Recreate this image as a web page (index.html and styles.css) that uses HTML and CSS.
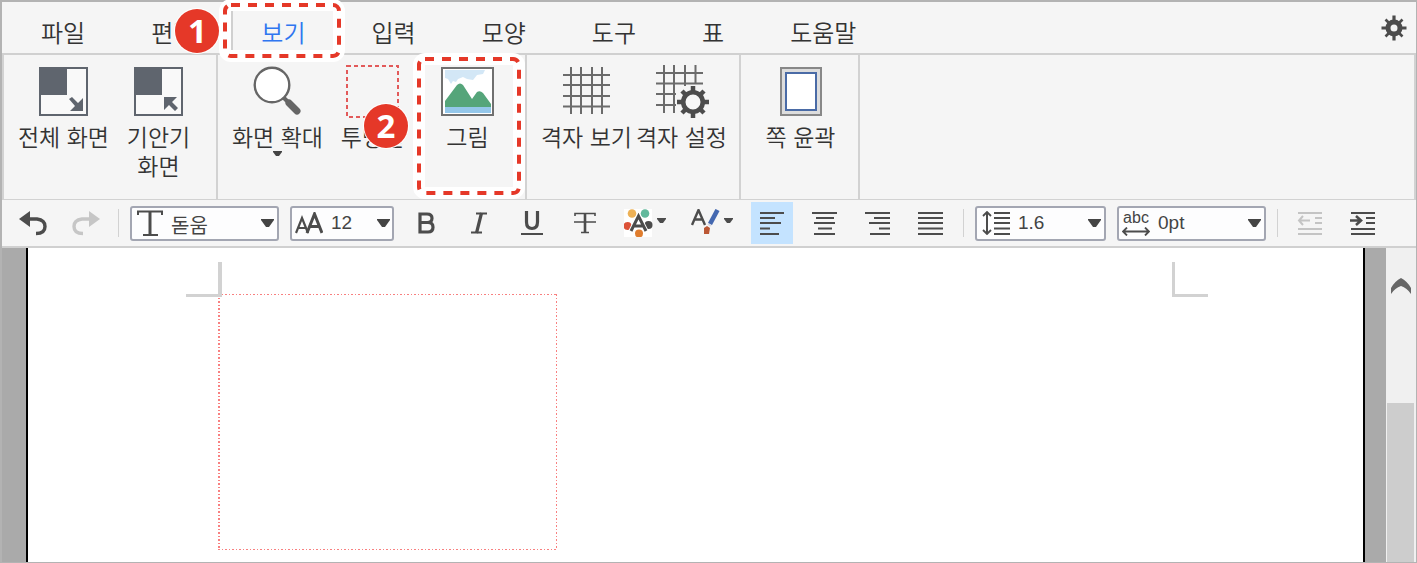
FILE: index.html
```html
<!DOCTYPE html>
<html lang="ko">
<head>
<meta charset="utf-8">
<title>보기</title>
<link rel="stylesheet" href="styles.css">
</head>
<body>
<div class="editor">
  <header class="menubar">
    <nav class="tabs">
      <button class="tab">파일</button>
      <button class="tab">편집</button>
      <button class="tab tab-active">보기
        <svg class="callout callout-tab" viewBox="0 0 128 64"><rect class="halo" x="7" y="7" width="114" height="51" rx="6"/><rect class="dash" x="7" y="7" width="114" height="51" rx="6"/></svg>
        <span class="badge badge-one">1</span>
      </button>
      <button class="tab">입력</button>
      <button class="tab">모양</button>
      <button class="tab">도구</button>
      <button class="tab">표</button>
      <button class="tab">도움말</button>
    </nav>
    <button class="settings" aria-label="설정">
      <svg width="26" height="26" viewBox="0 0 26 26"><g stroke="#4c4c4c" stroke-width="3.2"><path d="M13 .5v25M.5 13h25"/><path stroke-width="2.6" d="M4.500 4.500l17 17M21.500 4.500l-17 17"/></g><circle cx="13" cy="13" r="6" fill="#f4f4f4" stroke="#4c4c4c" stroke-width="5"/></svg>
    </button>
  </header>

  <section class="ribbon">
    <div class="group">
      <button class="tool">
        <svg class="icon" viewBox="0 0 53 53"><path d="M3 3h47v47H3z" fill="#f9f9f9" stroke="#5f656e" stroke-width="2"/><path d="M2 2h28v28H2z" fill="#5f656e"/><path d="M32 34l3-2 6 6 5-5v13H33l5-5z" fill="#5f656e"/></svg>
        <span>전체 화면</span>
      </button>
      <button class="tool">
        <svg class="icon" viewBox="0 0 53 53"><path d="M3 3h47v47H3z" fill="#f9f9f9" stroke="#5f656e" stroke-width="2"/><path d="M2 2h28v28H2z" fill="#5f656e"/><path d="M32 32h13l-5 5 6 6-3 3-6-6-5 5z" fill="#5f656e"/></svg>
        <span>기안기<br>화면</span>
      </button>
    </div>
    <div class="group">
      <button class="tool">
        <svg class="icon" viewBox="0 0 53 53"><path d="M32 32l5 5" stroke="#666" stroke-width="4"/><path d="M38 38l8 8" stroke="#666" stroke-width="7" stroke-linecap="round"/><circle cx="21" cy="20" r="17.300" fill="#fff" stroke="#666" stroke-width="2.400"/></svg>
        <span>화면 확대</span>
        <svg class="more" width="9" height="5" viewBox="0 0 9 5"><path d="M0 0h9v1L6 5H3L0 1z" fill="#444"/></svg>
      </button>
      <button class="tool">
        <svg class="icon" viewBox="0 0 53 53"><rect x="1" y="1" width="51" height="51" fill="none" stroke="#e25a5a" stroke-width="2" stroke-dasharray="4 3"/></svg>
        <span>투명선</span>
        <span class="badge badge-two">2</span>
      </button>
      <button class="tool">
        <svg class="icon" viewBox="0 0 53 53"><path d="M1 3h51v47H1z" fill="#fff" stroke="#707070" stroke-width="2"/><path d="M4 5h40l-2 4-6 1-4 5-6-1-4-2-5 2-2 3-3-1-2 3-3-5-3-1z" fill="#d3e7f6"/><path d="M4 42V36L16 20q3-3 6 0L31 34l5-7q3-2 6 1L50 39v3z" fill="#55a57a"/><path d="M4 42h46v6H4z" fill="#94c7ea"/></svg>
        <span>그림</span>
        <svg class="callout callout-picture" viewBox="0 0 114 148"><rect class="halo" x="7" y="7" width="100" height="134" rx="6"/><rect class="dash" x="7" y="7" width="100" height="134" rx="6"/></svg>
      </button>
    </div>
    <div class="group">
      <button class="tool">
        <svg class="icon" viewBox="0 0 53 53"><path d="M11 2v47M21 2v47M32 2v47M42 2v47M3 10h47M3 20h47M3 31h47M3 41.500h47" stroke="#6b6b6b" stroke-width="2"/></svg>
        <span>격자 보기</span>
      </button>
      <button class="tool">
        <svg class="icon gear-grid" viewBox="0 0 53 53"><path d="M9 0v48M19 0v48M30 0v21M40.500 0v18M1 8h47M1 18.500h47M1 29h20M1 40h20" stroke="#6b6b6b" stroke-width="2"/><circle cx="38" cy="37" r="14" fill="#f5f5f5"/><path d="M38 21v32M22 37h32M27 26l22 22M49 26L27 48" stroke="#4c4c4c" stroke-width="4.500"/><circle cx="38" cy="37" r="9.800" fill="#f7f7f7" stroke="#4c4c4c" stroke-width="4.600"/></svg>
        <span>격자 설정</span>
      </button>
    </div>
    <div class="group">
      <button class="tool">
        <svg class="icon" viewBox="0 0 53 53"><path d="M7 3h40v47H7z" fill="#ddd" stroke="#888" stroke-width="2"/><path d="M12 8h30v37H12z" fill="#fff" stroke="#4a6ba6" stroke-width="2"/></svg>
        <span>쪽 윤곽</span>
      </button>
    </div>
  </section>

  <section class="toolbar">
    <button class="act act-solid" aria-label="실행 취소"><svg width="28" height="26" viewBox="0 0 28 26"><path d="M10 9h8q8 1 8 7.500 0 7-9 7" fill="none" stroke="#4c4c4c" stroke-width="3.400"/><path d="M0 9L11 1v16z" fill="#4c4c4c"/></svg></button>
    <button class="act act-solid" aria-label="다시 실행"><svg width="28" height="26" viewBox="0 0 28 26"><path d="M18 9h-8q-8 1-8 7.500 0 7 9 7" fill="none" stroke="#c6c6c6" stroke-width="3.400"/><path d="M28 9L17 1v16z" fill="#c6c6c6"/></svg></button>
    <i class="sep"></i>
    <label class="field field-font">
      <svg width="26" height="26" viewBox="0 0 26 26"><path d="M1 5V1.500h24V5" fill="none" stroke="#4c4c4c" stroke-width="2"/><path d="M13 1v24" stroke="#4c4c4c" stroke-width="3"/><path d="M6 25h15" stroke="#4c4c4c" stroke-width="2"/></svg>
      <select class="font-name" aria-label="글꼴"><option>돋움</option></select>
      <svg class="caret" viewBox="0 0 14 10"><path d="M1 1h13v1L9 9H6L1 2z"/></svg>
    </label>
    <label class="field field-size">
      <svg width="28" height="22" viewBox="0 0 28 22"><path d="M1 21L7 6l6 15M3 16h8" fill="none" stroke="#4c4c4c" stroke-width="2.200"/><path d="M12 21L19.500 2 27 21M14 14.500h11" fill="none" stroke="#4c4c4c" stroke-width="3"/></svg>
      <select aria-label="글자 크기"><option>12</option></select>
      <svg class="caret" viewBox="0 0 14 10"><path d="M1 1h13v1L9 9H6L1 2z"/></svg>
    </label>
    <button class="act" aria-label="굵게"><svg width="18" height="22" viewBox="0 0 18 22"><path d="M3 2h7q5 0 5 4.300T10 10.500H3zM3 10.500h8q5 0 5 4.700T11 20H3z" fill="none" stroke="#4c4c4c" stroke-width="3.200"/></svg></button>
    <button class="act" aria-label="기울임"><svg width="18" height="22" viewBox="0 0 18 22"><path d="M6 1.500h11M1 20.500h11" stroke="#4c4c4c" stroke-width="2"/><path d="M11.500 1L6.500 21" stroke="#4c4c4c" stroke-width="3.200"/></svg></button>
    <button class="act" aria-label="밑줄"><svg width="22" height="24" viewBox="0 0 22 24"><path d="M5.500 0v11q0 6.500 5.500 6.500t5.500-6.500V0" fill="none" stroke="#4c4c4c" stroke-width="3.200"/><path d="M0 23h22" stroke="#4c4c4c" stroke-width="2"/></svg></button>
    <button class="act" aria-label="취소선"><svg width="22" height="22" viewBox="0 0 22 22"><path d="M1 4V1.500h20V4M0 10h22M7 20.500h8" fill="none" stroke="#4c4c4c" stroke-width="1.600"/><path d="M11 1v20" stroke="#4c4c4c" stroke-width="2.600"/></svg></button>
    <button class="act act-solid act-wide" aria-label="글자 색"><svg width="42" height="28" viewBox="0 0 42 28"><path d="M0 0h28v28H0z" fill="#fff"/><circle cx="8" cy="4.500" r="4.300" fill="#edb156"/><circle cx="21" cy="4.500" r="4.300" fill="#62b99c"/><circle cx="3.500" cy="17" r="4" fill="#dc5238"/><circle cx="24.500" cy="16" r="4" fill="#4c4c4c"/><circle cx="15" cy="24.500" r="4" fill="#e07d2e"/><path d="M7 22l7.500-15L22 22M10 17h9" fill="none" stroke="#fff" stroke-width="5"/><path d="M7 22l7.500-15L22 22M10 17h9" fill="none" stroke="#4c4c4c" stroke-width="3"/><path d="M33 9h9v1l-3 4h-3l-3-4z" fill="#4c4c4c"/></svg></button>
    <button class="act act-solid act-wide" aria-label="글자 서식"><svg width="42" height="28" viewBox="0 0 42 28"><path d="M1 16L7.500 1 14 16M3.500 10.500h8" fill="none" stroke="#4c4c4c" stroke-width="2.400"/><path d="M26.500 1L19 15" stroke="#4468b0" stroke-width="4.600"/><path d="M17 15l3 2" stroke="#d9d9e4" stroke-width="2"/><path d="M13 19l3-2 3 2-1 6h-5z" fill="#bb5734"/><path d="M33 9h9v1l-3 4h-3l-3-4z" fill="#4c4c4c"/></svg></button>
    <button class="act act-on" aria-label="왼쪽 정렬"><svg width="26" height="24" viewBox="0 0 26 24"><path d="M1 2h24M1 7h15M1 12h21M1 17.500h10M1 23h19"/></svg></button>
    <button class="act" aria-label="가운데 정렬"><svg width="26" height="24" viewBox="0 0 26 24"><path d="M0 2h25M4 7h18M2 12h21M6 17.500h14M2 23h21"/></svg></button>
    <button class="act" aria-label="오른쪽 정렬"><svg width="26" height="24" viewBox="0 0 26 24"><path d="M0 2h25M9 7h16M4 12h21M14 17.500h11M5 23h20"/></svg></button>
    <button class="act" aria-label="양쪽 정렬"><svg width="26" height="24" viewBox="0 0 26 24"><path d="M0 2h25M0 7h25M0 12h25M0 17.500h25M0 23h25"/></svg></button>
    <i class="sep"></i>
    <label class="field field-line">
      <svg width="28" height="24" viewBox="0 0 28 24"><path d="M5 2v20" stroke="#4c4c4c" stroke-width="2"/><path d="M1 5l4-4 4 4M1 19l4 4 4-4" fill="none" stroke="#4c4c4c" stroke-width="1.800"/><path d="M12 2h16M12 7h16M12 12h16M12 17.500h16M12 23h16" stroke="#4c4c4c" stroke-width="1.800"/></svg>
      <select aria-label="줄 간격"><option>1.6</option></select>
      <svg class="caret" viewBox="0 0 14 10"><path d="M1 1h13v1L9 9H6L1 2z"/></svg>
    </label>
    <label class="field field-space">
      <span class="abc">abc<svg width="28" height="9" viewBox="0 0 28 9"><path d="M1 4.500h26M5 .5l-4 4 4 4M23 .5l4 4-4 4" fill="none" stroke="#4c4c4c" stroke-width="1.800"/></svg></span>
      <select aria-label="글자 간격"><option>0pt</option></select>
      <svg class="caret" viewBox="0 0 14 10"><path d="M1 1h13v1L9 9H6L1 2z"/></svg>
    </label>
    <i class="sep"></i>
    <button class="act act-off" aria-label="내어쓰기"><svg width="26" height="24" viewBox="0 0 26 24"><path d="M1 2h24M18 7h7M18 12h7M1 18h24M1 23h24M2 9.500h11M6 5L2 9.500 6 14"/></svg></button>
    <button class="act" aria-label="들여쓰기"><svg width="26" height="24" viewBox="0 0 26 24"><path d="M1 2h24M16 7h9M16 12h9M1 18h24M1 23h24"/><path d="M0 9.500h11M6 5l5 4.500L6 14" stroke-width="2.600"/></svg></button>
  </section>

  <main class="workspace">
    <div class="page">
      <div class="marks"><i class="mark mark-left"></i><i class="mark mark-right"></i></div>
      <div class="frame"></div>
    </div>
    <div class="scrollbar">
      <button class="up" aria-label="위로"><svg width="20" height="16" viewBox="0 0 20 16"><path d="M0 10Q4 3 10 0q6 3 10 10v6q-4-6-10-8Q4 10 0 16z" fill="#666"/></svg></button>
      <div class="thumb"></div>
    </div>
  </main>
</div>
</body>
</html>
```
FILE: styles.css
```css
* { box-sizing: border-box; }

body {
  margin: 0;
  font-family: "Noto Sans CJK KR", sans-serif;
  font-weight: 350;
  color: #333;
}

button {
  position: relative;
  margin: 0;
  padding: 0;
  border: 0;
  background: none;
  color: inherit;
  font: inherit;
}

svg { display: block; flex: none; }

.editor {
  display: flex;
  flex-direction: column;
  min-height: 100vh;
  border: solid #b3b3b3;
  border-width: 2px 1px 1px 2px;
  background: #f5f5f5;
}

.menubar {
  display: flex;
  align-items: stretch;
  justify-content: space-between;
  height: 53px;
  padding: 0 9px;
  border-bottom: 2px solid #d0d0d0;
}

.tabs { display: flex; gap: 6px; padding-top: 8px; }

.tab {
  padding: 0 28px;
  border: solid transparent;
  border-width: 0 2px;
  font-size: 24px;
  line-height: 43px;
  white-space: nowrap;
}

.tab-active { z-index: 2; border-color: #d0d0d0; color: #2f76f0; }

.settings { align-self: center; }

.ribbon {
  display: flex;
  height: 145px;
  border: solid #d2d2d2;
  border-width: 0 2px 1px;
}

.group {
  display: flex;
  padding: 0 10px 0 12px;
  border-right: 2px solid #d2d2d2;
}

.tool {
  display: flex;
  flex-direction: column;
  align-items: center;
  width: 95px;
  padding-top: 10px;
  font-size: 23px;
  line-height: 29px;
  white-space: nowrap;
}

.icon { width: 53px; height: 53px; margin-bottom: 4px; }
.gear-grid { overflow: visible; }

.callout { position: absolute; z-index: 1; fill: none; }
.callout-tab { left: -15px; top: -12px; width: 128px; height: 64px; }
.callout-picture { left: -8px; top: -3px; width: 114px; height: 148px; }
.halo { stroke: #fff; stroke-width: 12px; }
.dash { stroke: #e53828; stroke-width: 4px; stroke-dasharray: 9 8; }

.badge {
  position: absolute;
  z-index: 2;
  width: 44px;
  height: 44px;
  border-radius: 50%;
  background: #e53828;
  box-shadow: 0 0 0 1px #fff;
  color: #fff;
  font: 700 33px/44px "Open Sans", sans-serif;
  text-align: center;
}
.badge-one { left: -58px; top: -1px; }
.badge-two { left: 39px; top: 49px; }

.toolbar {
  display: flex;
  align-items: center;
  gap: 11px;
  height: 48px;
  padding: 0 10px;
  border-bottom: 2px solid #d0d0d0;
}

.act {
  display: flex;
  align-items: center;
  justify-content: center;
  flex: none;
  width: 42px;
  height: 42px;
  stroke: #4c4c4c;
  stroke-width: 2px;
  fill: none;
}
.act-solid { stroke: none; }
.act-wide { width: 56px; }
.act-on { background: #c4e3ff; }
.act-off { stroke: #c4c4c4; }

.sep { flex: none; width: 1px; height: 28px; background: #d2d2d2; }

.field {
  display: flex;
  align-items: center;
  flex: none;
  height: 35px;
  padding: 0 3px 0 5px;
  border: 2px solid #a3a6b2;
  border-radius: 3px;
  background: #fdfdfe;
}
.field-font { width: 149px; }
.field-size { width: 104px; padding: 0 2px 0 3px; }
.field-line { width: 131px; }
.field-space { width: 149px; padding-left: 3px; }

.field select {
  flex: 1;
  min-width: 0;
  margin: 0;
  padding: 0 0 0 8px;
  border: 0;
  background: none;
  color: #444;
  font: 400 19px/30px "Liberation Sans", "Noto Sans CJK KR", sans-serif;
  appearance: none;
}
.field .font-name { padding-top: 3px; font: 400 20px/28px "Noto Sans CJK KR", sans-serif; }

.caret { width: 14px; height: 10px; fill: #444; }

.abc {
  display: flex;
  flex-direction: column;
  align-items: center;
  width: 28px;
  color: #444;
  font: 400 16px/15px "Liberation Sans", sans-serif;
}
.abc svg { margin-top: 2px; }

.workspace {
  display: flex;
  flex: 1;
  padding-left: 24px;
  background: #aaa;
}

.page {
  flex: 1;
  margin-right: 21px;
  padding: 14px 155px 12px 158px;
  border: solid #000;
  border-width: 0 2px;
  background: #fff;
}

.marks { display: flex; justify-content: space-between; }
.mark { width: 36px; height: 35px; border: 0 solid #d2d2d2; }
.mark-left { border-width: 0 4px 3px 0; }
.mark-right { border-width: 0 0 3px 3px; }

.frame {
  --run: #f88080 0 2px, transparent 2px 4px, #f88080 4px 5px, transparent 5px 7px;
  width: 339px;
  height: 256px;
  margin: -3px 0 0 32px;
  background:
    repeating-linear-gradient(90deg, var(--run)) top / 100% 1px no-repeat,
    repeating-linear-gradient(90deg, var(--run)) bottom / 100% 1px no-repeat,
    repeating-linear-gradient(var(--run)) left / 2px 100% no-repeat,
    repeating-linear-gradient(var(--run)) right / 1px 100% no-repeat;
}

.scrollbar {
  display: flex;
  flex-direction: column;
  width: 30px;
  padding: 0 2px 0 1px;
  background: #f0f0f0;
}
.up { display: flex; justify-content: center; height: 155px; padding-top: 30px; }
.thumb { flex: 1; background: #cdcdcd; }
```
